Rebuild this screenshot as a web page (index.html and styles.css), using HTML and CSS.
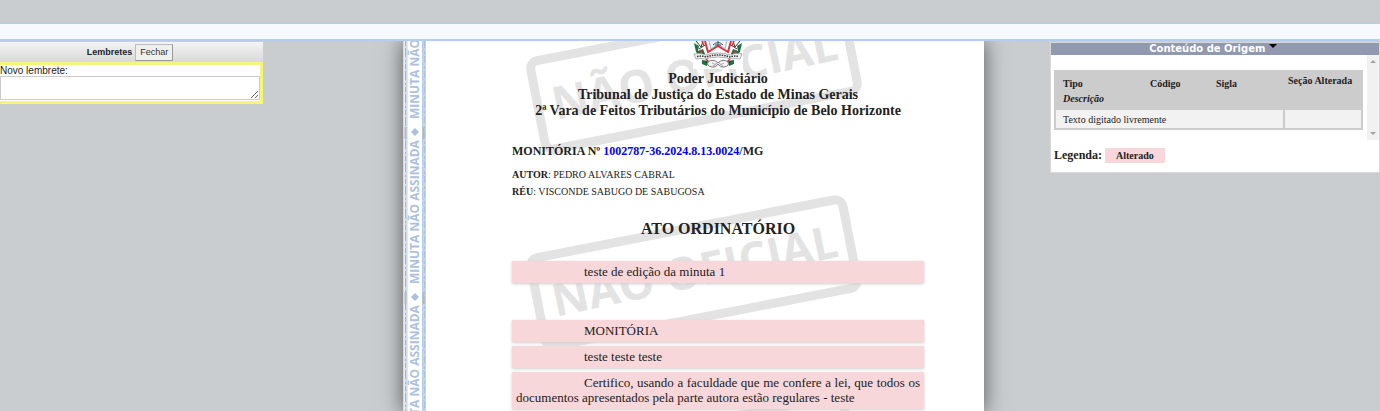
FILE: index.html
```
<!DOCTYPE html>
<html lang="pt-BR">
<head>
<meta charset="utf-8">
<title>Minuta</title>
<link rel="stylesheet" href="styles.css">
</head>
<body>
<header class="toolbar"></header>
<main class="workspace">
  <aside class="reminders">
    <div class="reminders-head">
      <strong>Lembretes</strong>
      <button class="close" type="button">Fechar</button>
    </div>
    <div class="reminders-body">
      <label for="note">Novo lembrete:</label>
      <textarea id="note" class="note"></textarea>
    </div>
  </aside>

  <article class="sheet">
    <div class="strip">
      <svg width="23" height="370" viewBox="0 0 23 370" aria-hidden="true">
        <rect width="23" height="370" fill="#fff"/>
        <rect width="4" height="370" fill="#cfdcec"/>
        <rect x="19" width="4" height="370" fill="#c3d5ea"/>
        <g fill="none" stroke-width="1">
          <path d="M1.5 0V370" stroke="#e6edf5"/>
          <path d="M2.5 0V370" stroke="#a3b4cb" stroke-dasharray="5 2 9 3 2 2"/>
          <path d="M4.5 0V370" stroke="#dfe9f4"/>
          <path d="M19.5 0V370" stroke="#b4c8e1" stroke-dasharray="12 2 4 3"/>
          <path d="M21.5 0V370" stroke="#a8c1de" stroke-dasharray="7 3 3 2"/>
          <path d="M2.5 86v12M2.5 251v12M20.5 86v12M20.5 251v12" stroke="#b5b9bd" stroke-width="2"/>
        </g>
        <g class="strip-text">
          <text transform="translate(16 78) rotate(-90)">MINUTA NÃO ASSINADA</text>
          <text transform="translate(16 243) rotate(-90)">MINUTA NÃO ASSINADA</text>
          <text transform="translate(16 408) rotate(-90)">MINUTA NÃO ASSINADA</text>
          <path d="M12 87l4 4-4 4-4-4zM12 252l4 4-4 4-4-4z"/>
        </g>
      </svg>
    </div>
    <div class="document">
      <svg class="stamps" width="360" height="370" viewBox="0 0 360 370" aria-hidden="true">
        <defs>
          <g id="stamp">
            <rect x="-159" y="-45" width="318" height="90" rx="8" fill="none" stroke="#e3e3e3" stroke-width="9"/>
            <text class="stamp-text" x="1" y="14" transform="rotate(-1)">NÃO OFICIAL</text>
          </g>
        </defs>
        <use href="#stamp" transform="translate(182 35) rotate(-11)"/>
        <use href="#stamp" transform="translate(182 232) rotate(-11)"/>
        <use href="#stamp" transform="translate(182 429) rotate(-11)"/>
      </svg>
      <div class="content">
        <svg class="crest" width="50" height="28" viewBox="0 0 50 28" role="img" aria-label="Brasão de Minas Gerais">
          <rect width="50" height="28" fill="#fff"/>
          <path d="M12 0l3 11 10-6 10 6 3-11" fill="none" stroke="#d9343c" stroke-width="2"/>
          <path d="M16 0l2 8 7-5 7 5 2-8" fill="#eef0f2" stroke="#93b4c4"/>
          <path d="M20 4q5-5 10 0M22 4h6M25 0v5" fill="none" stroke="#4a545e"/>
          <path d="M1 2l5 3-1 5 5-2 2 5-5 2-4-4zM49 2l-5 3 1 5-5-2-2 5 5 2 4-4zM9 19l6 1-1 5-5-2zM41 19l-6 1 1 5 5-2z" fill="#1f7042"/>
          <path d="M3 0l5 6 2-6M47 0l-5 6-2-6M6 8l6-4M44 8l-6-4M12 20l5 4M38 20l-5 4" fill="none" stroke="#2c3a32"/>
          <path d="M9 0l2 5M41 0l-2 5M7 9l2 3M43 9l-2 3M13 18l3 3M37 18l-3 3" stroke="#d9343c" stroke-width="1.5"/>
          <path d="M1 13q6-2 12 1 12-4 24 0 6-3 12-1l-2 5q-5-1-9 0-13-4-26 0-4-1-9 0z" fill="#f4f4f4" stroke="#8c8c8c" stroke-width=".7"/>
          <path d="M4 15.500q5-1 9 .5 12-4 24 0 4-1.500 9-.5" fill="none" stroke="#333" stroke-width="1.500" stroke-dasharray="1.500 1"/>
          <path d="M15 21q5-4 10 1 5-5 10-1 2 4-4 5-4 1-6-3-2 4-6 3-6-1-4-5z" fill="#f5f5f5" stroke="#777"/>
          <path d="M19 22l4 2M31 22l-4 2M20 25l4-3M30 25l-4-3" stroke="#aaa"/>
        </svg>
        <div class="court">
          <div>Poder Judiciário</div>
          <div>Tribunal de Justiça do Estado de Minas Gerais</div>
          <div>2ª Vara de Feitos Tributários do Município de Belo Horizonte</div>
        </div>
        <div class="case">MONITÓRIA Nº <a href="#processo">1002787-36.2024.8.13.0024</a>/MG</div>
        <div class="party"><b>AUTOR</b>: PEDRO ALVARES CABRAL</div>
        <div class="party"><b>RÉU</b>: VISCONDE SABUGO DE SABUGOSA</div>
        <h1 class="title">ATO ORDINATÓRIO</h1>
        <p class="changed first">teste de edição da minuta 1</p>
        <p class="changed">MONITÓRIA</p>
        <p class="changed">teste teste teste</p>
        <p class="changed">Certifico, usando a faculdade que me confere a lei, que todos os documentos apresentados pela parte autora estão regulares - teste</p>
      </div>
    </div>
  </article>

  <aside class="origin">
    <h2 class="origin-head">Conteúdo de Origem <span class="caret"></span></h2>
    <div class="origin-scroll">
      <table class="origin-table">
        <thead>
          <tr><th class="c-type">Tipo<br><i>Descrição</i></th><th class="c-code">Código</th><th class="c-sigla">Sigla</th><th class="c-section">Seção Alterada</th></tr>
        </thead>
        <tbody>
          <tr><td colspan="3">Texto digitado livremente</td><td></td></tr>
        </tbody>
      </table>
      <div class="scrollbar"><span class="up"></span><span class="down"></span></div>
    </div>
    <div class="legend"><b>Legenda:</b><span class="tag">Alterado</span></div>
  </aside>
</main>
</body>
</html>
```
FILE: styles.css
```
* { box-sizing: border-box; }
body {
  margin: 0;
  height: 100vh;
  overflow: hidden;
  display: flex;
  flex-direction: column;
  background: #c9cdcf;
  color: #222;
  font-family: "Liberation Serif", serif;
}
.toolbar {
  flex: none;
  height: 18px;
  margin-top: 23px;
  background: #f6fafe;
  border-top: 1px solid #b4cdf2;
  border-bottom: 2px solid #b4cdf2;
}
.workspace {
  flex: 1;
  min-height: 0;
  overflow: hidden;
  display: grid;
  grid-template-columns: 403fr 581fr 396fr;
}

.reminders {
  width: 263px;
  padding-top: 1px;
  font: 10px/12px "Liberation Sans", sans-serif;
}
.reminders-head {
  display: flex;
  justify-content: center;
  align-items: center;
  gap: 3px;
  height: 20px;
  padding-right: 3px;
  background: linear-gradient(#f4f4f4, #d9d9d9);
  font-size: 9px;
}
.close {
  height: 17px;
  padding: 0 4px;
  border: 1px solid #bbb;
  border-right-color: #999;
  border-bottom-color: #999;
  background: #efefef;
  color: #333;
  font: 9px/12px "Liberation Sans", sans-serif;
}
.reminders-body {
  border: 3px solid #f7f47c;
  border-left: 0;
  background: #fff;
  padding-bottom: 1px;
}
.reminders-body label { display: block; line-height: 11px; }
.note {
  display: block;
  width: 100%;
  height: 24px;
  border: 1px solid #ccc;
  background: #fff;
  resize: vertical;
}

.sheet {
  display: flex;
  background: #fff;
  box-shadow: 0 0 20px #555;
}
.strip { flex: none; width: 23px; overflow: hidden; }
.strip svg { display: block; }
.strip-text { fill: #abc1de; font: bold 12px "Open Sans", sans-serif; }
.document { position: relative; flex: 1; min-width: 0; }
.stamps { position: absolute; top: 0; left: 86px; }
.stamp-text {
  fill: #e3e3e3;
  font: bold 45px "Open Sans", sans-serif;
  text-anchor: middle;
}
.content { position: relative; padding: 0 60px 0 86px; }
.crest { display: block; margin: 0 auto; }
.court {
  padding-top: 2px;
  text-align: center;
  font-weight: bold;
  font-size: 14px;
  line-height: 16px;
}
.case { margin-top: 23px; font-weight: bold; font-size: 12px; line-height: 18px; }
.case a { color: #00f; text-decoration: none; }
.party { font-size: 10px; line-height: 17px; }
.case + .party { margin-top: 6px; }
.title { margin: 20px 0 23px; text-align: center; font-size: 16px; line-height: 18px; }
.changed {
  margin: 0 0 4px;
  padding: 3px 4px 4px;
  background: #f7d7da;
  box-shadow: 0 1px 3px #ccc;
  text-indent: 68px;
  text-align: justify;
  font-size: 13px;
  line-height: 15px;
}
.changed.first { margin-bottom: 37px; }

.origin {
  justify-self: end;
  align-self: start;
  width: 330px;
  margin-top: 1px;
  padding-bottom: 9px;
  background: #fff;
  border: 1px solid #d8d8d8;
}
.origin-head {
  margin: 0;
  padding-right: 4px;
  background: #9199af;
  color: #fff;
  text-align: center;
  font: bold 10px/12px "DejaVu Sans", sans-serif;
}
.caret {
  display: inline-block;
  vertical-align: top;
  margin-top: 1px;
  border: 4px solid transparent;
  border-top-color: #000;
  border-bottom: 0;
}
.origin-scroll { display: flex; height: 85px; }
.origin-table {
  flex: 1;
  align-self: flex-start;
  margin: 15px 4px 0 3px;
  border-collapse: collapse;
  table-layout: fixed;
  border: 2px solid #ccc;
  background: #ccc;
  font-size: 10px;
}
.origin-table th {
  padding: 4px 7px 2px;
  vertical-align: top;
  text-align: left;
  line-height: 15px;
}
.origin-table td {
  height: 20px;
  padding: 0 7px;
  border: 2px solid #ccc;
  background: #f2f2f2;
}
.c-type { width: 88px; }
.c-code { width: 66px; }
.c-section { width: 78px; }
.origin-table .c-section { padding: 1px 4px; white-space: nowrap; }
.scrollbar {
  display: flex;
  flex-direction: column;
  justify-content: space-between;
  align-items: center;
  width: 12px;
  padding: 5px 0;
  background: #f1f1f1;
}
.up, .down { border: 3px solid transparent; }
.up { border-top: 0; border-bottom-color: #a3a3a3; }
.down { border-bottom: 0; border-top-color: #a3a3a3; }
.legend {
  display: flex;
  align-items: center;
  gap: 3px;
  margin-top: 8px;
  padding-left: 3px;
  font-size: 12px;
  line-height: 15px;
}
.tag { padding: 0 11px; background: #f7d7da; font-size: 10px; font-weight: bold; }
```
